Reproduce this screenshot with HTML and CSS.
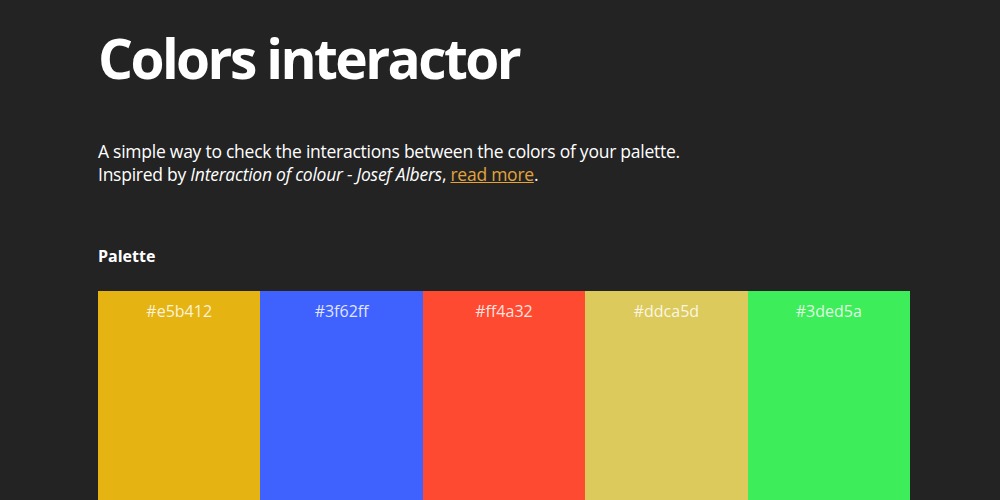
FILE: index.html
```html
<!DOCTYPE html>
<html lang="en">
<head>
<meta charset="utf-8">
<title>Colors interactor</title>
<link rel="stylesheet" href="styles.css">
</head>
<body>
<main class="page">
  <h1 class="title">Colors interactor</h1>
  <p class="intro">A simple way to check the interactions between the colors of your palette.<br>Inspired by <em>Interaction of colour - Josef Albers</em>, <a href="#" class="link">read more</a>.</p>
  <h2 class="section-title">Palette</h2>
  <div class="palette">
    <div class="swatch" style="background:#e5b412"><span class="code">#e5b412</span></div>
    <div class="swatch" style="background:#3f62ff"><span class="code">#3f62ff</span></div>
    <div class="swatch" style="background:#ff4a32"><span class="code">#ff4a32</span></div>
    <div class="swatch" style="background:#ddca5d"><span class="code">#ddca5d</span></div>
    <div class="swatch" style="background:#3ded5a"><span class="code">#3ded5a</span></div>
  </div>
</main>
</body>
</html>
```
FILE: styles.css
```css
html, body {
  margin: 0;
  padding: 0;
  background: #232323;
  color: #ffffff;
  font-family: "Open Sans", "Noto Sans", sans-serif;
  overflow: hidden;
}
.page {
  width: 812px;
  margin: 0 0 0 98px;
  padding-top: 22px;
}
.title {
  margin: 0;
  font-size: 55px;
  font-weight: 700;
  line-height: 72px;
  letter-spacing: -2.6px;
}
.intro {
  margin: 46px 0 0;
  font-size: 17.5px;
  line-height: 23px;
  letter-spacing: -0.25px;
}
.link {
  color: #e2a43b;
}
.section-title {
  margin: 59px 0 0;
  font-size: 16px;
  font-weight: 700;
  line-height: 22px;
}
.palette {
  margin-top: 24px;
  display: grid;
  grid-template-columns: repeat(5, 1fr);
  height: 220px;
}
.swatch {
  display: flex;
  justify-content: center;
  padding-top: 9px;
}
.code {
  font-size: 16px;
  line-height: 22px;
  color: rgba(255, 255, 255, 0.85);
}
```
